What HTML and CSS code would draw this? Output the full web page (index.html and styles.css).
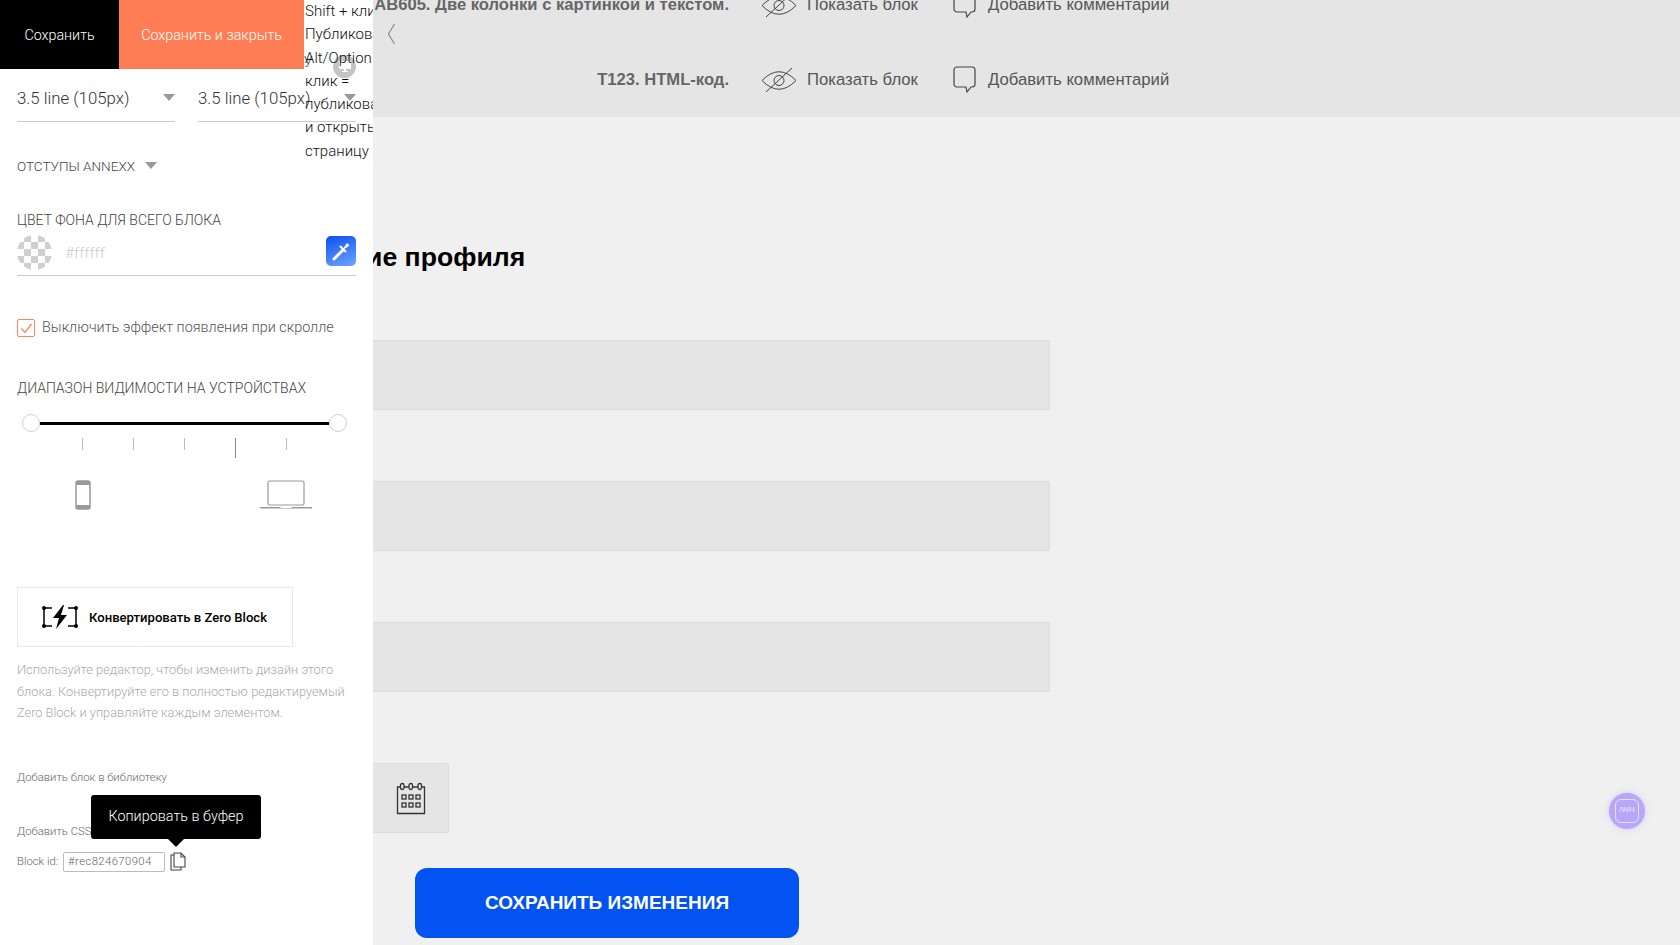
FILE: index.html
```html
<!DOCTYPE html>
<html lang="en">
<head>
  <meta charset="UTF-8">
  <title>Настройки блока</title>
  <link rel="stylesheet" href="styles.css">
</head>
<body>

  <div class="page">
    <div class="blocks">
      <svg class="blocks-back" width="9" height="22" viewBox="0 0 9 22"><path d="M7.500 1 1.500 11l6 10" fill="none" stroke="#8a8a8a" stroke-width="1.200"/></svg>
      <div class="block-row">
        <div class="block-title">AB605. Две колонки с картинкой и текстом.</div>
        <div class="block-action block-show">
          <svg width="36" height="32" viewBox="0 0 36 32"><path d="M1 16.500Q18 -1 35 16.500Q18 34 1 16.500Z" fill="none" stroke="#444"/><circle cx="18" cy="16.500" r="5" fill="none" stroke="#444"/><path d="M5 28 31 4" stroke="#444"/></svg>
          <span>Показать блок</span>
        </div>
        <div class="block-action">
          <svg width="23" height="27" viewBox="0 0 23 27"><path d="M4 1h15a3 3 0 0 1 3 3v14a3 3 0 0 1-3 3h-1l-4 5-1-5H4a3 3 0 0 1-3-3V4a3 3 0 0 1 3-3Z" fill="none" stroke="#444" stroke-width="1.200"/></svg>
          <span>Добавить комментарий</span>
        </div>
      </div>
      <div class="block-row">
        <div class="block-title">T123. HTML-код.</div>
        <div class="block-action block-show">
          <svg width="36" height="32" viewBox="0 0 36 32"><path d="M1 16.500Q18 -1 35 16.500Q18 34 1 16.500Z" fill="none" stroke="#444"/><circle cx="18" cy="16.500" r="5" fill="none" stroke="#444"/><path d="M5 28 31 4" stroke="#444"/></svg>
          <span>Показать блок</span>
        </div>
        <div class="block-action">
          <svg width="23" height="27" viewBox="0 0 23 27"><path d="M4 1h15a3 3 0 0 1 3 3v14a3 3 0 0 1-3 3h-1l-4 5-1-5H4a3 3 0 0 1-3-3V4a3 3 0 0 1 3-3Z" fill="none" stroke="#444" stroke-width="1.200"/></svg>
          <span>Добавить комментарий</span>
        </div>
      </div>
    </div>

    <div class="profile">
      <h1 class="profile-title">Изменение профиля</h1>
      <div class="profile-input"></div>
      <div class="profile-input"></div>
      <div class="profile-input"></div>
      <div class="profile-input profile-date">
        <svg width="30" height="33" viewBox="0 0 30 33" fill="none" stroke="#333" stroke-width="1.300">
          <path d="M4 5H1.500v26.500h27V5H26M8 5h5M17 5h5"/>
          <rect x="4.500" y="1.500" width="3.500" height="6" rx="1.750"/><rect x="13" y="1.500" width="3.500" height="6" rx="1.750"/><rect x="22" y="1.500" width="3.500" height="6" rx="1.750"/>
          <rect x="6" y="13" width="4" height="4"/><rect x="13" y="13" width="4" height="4"/><rect x="20" y="13" width="4" height="4"/>
          <rect x="6" y="21" width="4" height="4"/><rect x="13" y="21" width="4" height="4"/><rect x="20" y="21" width="4" height="4"/>
        </svg>
      </div>
      <div class="profile-save">СОХРАНИТЬ ИЗМЕНЕНИЯ</div>
    </div>

    <div class="chat-widget"><span>/WH</span></div>
  </div>

  <div class="panel">
    <div class="panel-top">
      <div class="panel-save">Сохранить</div>
      <div class="panel-close">Сохранить и закрыть</div>
    </div>

    <div class="panel-hint">Shift + клик<br>Публиковать<br>Alt/Option<br>клик =<br>публиковать<br>и открыть<br>страницу</div>

    <div class="panel-body">
      <div class="pad-fields">
        <div class="pad-field">
          <div class="field-label">ОТСТУПЫ СВЕРХУ</div>
          <div class="pad-select"><span>3.5 line (105px)</span><i class="arrow"></i></div>
        </div>
        <div class="pad-field">
          <div class="field-label">ОТСТУПЫ СНИЗУ</div>
          <div class="pad-select"><span>3.5 line (105px)</span><i class="arrow"></i></div>
          <div class="screen-badge">
            <svg width="14" height="13" viewBox="0 0 14 13"><path d="M1 1h12v8H8v2h2v1H4v-1h2V9H1Z" fill="#fff"/></svg>
          </div>
        </div>
      </div>

      <div class="annexx">ОТСТУПЫ ANNEXX <i class="arrow"></i></div>

      <div class="field-label color-label">ЦВЕТ ФОНА ДЛЯ ВСЕГО БЛОКА</div>
      <div class="color-field">
        <div class="color-swatch"></div>
        <div class="color-value">#ffffff</div>
        <div class="color-picker">
          <svg width="22" height="22" viewBox="0 0 22 22" fill="#fff"><path d="M4 19 12.500 10.500" stroke="#fff" stroke-width="3" stroke-linecap="round"/><path d="M10.500 6.500l5 5" stroke="#fff" stroke-width="2" stroke-linecap="round"/><path d="M13 9 16.500 3.500a2 2 0 0 1 2.500 2.500L13.500 9.500Z"/></svg>
        </div>
      </div>

      <div class="scroll-check">
        <div class="check-box">
          <svg width="13" height="11" viewBox="0 0 13 11"><path d="M1.500 5.500 5 9.500 11.500 1" fill="none" stroke="#ff8562" stroke-width="1.300"/></svg>
        </div>
        <span>Выключить эффект появления при скролле</span>
      </div>

      <div class="field-label range-label">ДИАПАЗОН ВИДИМОСТИ НА УСТРОЙСТВАХ</div>
      <div class="range">
        <div class="range-knob"></div>
        <div class="range-line"></div>
        <div class="range-knob"></div>
      </div>
      <div class="range-ticks">
        <i></i><i></i><i></i><i class="tick-long"></i><i></i>
      </div>
      <div class="range-devices">
        <svg width="16" height="30" viewBox="0 0 16 30"><rect x="1" y="1" width="14" height="28" rx="2" fill="none" stroke="#999" stroke-width="1.500"/><rect x="1" y="1" width="14" height="4" fill="#999"/><rect x="1" y="25" width="14" height="4" fill="#999"/></svg>
        <svg width="52" height="30" viewBox="0 0 52 30"><rect x="8" y="1" width="36" height="24" rx="1.500" fill="none" stroke="#999" stroke-width="1.200"/><path d="M0 27h20l1 1h10l1-1h20v1.500H0Z" fill="#999"/></svg>
      </div>

      <div class="zero-btn">
        <svg width="36" height="24" viewBox="0 0 36 24">
          <path d="M10 3H2v18h8M26 3h8v18h-8" fill="none" stroke="#000" stroke-width="1.500"/>
          <path d="M21 0 11 13h6l-3 11 11-14h-6l3-10Z"/>
          <circle cx="2" cy="3" r="2"/><circle cx="34" cy="3" r="2"/><circle cx="2" cy="21" r="2"/><circle cx="34" cy="21" r="2"/>
        </svg>
        <span>Конвертировать в Zero Block</span>
      </div>
      <div class="zero-note">Используйте редактор, чтобы изменить дизайн этого блока. Конвертируйте его в полностью редактируемый Zero Block и управляйте каждым элементом.</div>

      <div class="panel-link link-lib">Добавить блок в библиотеку</div>
      <div class="panel-link link-css">Добавить CSS</div>

      <div class="block-id">
        <span>Block id:</span>
        <div class="block-id-value">#rec824670904</div>
        <svg width="16" height="19" viewBox="0 0 16 19" fill="none" stroke="#444" stroke-width="1.100"><path d="M4 3H1v15h10v-3"/><path d="M4 1h7l4 4v10H4Z"/><path d="M11 1v4h4"/></svg>
        <div class="copy-tip">Копировать в буфер</div>
      </div>
    </div>
  </div>

</body>
</html>
```

FILE: styles.css
```css
html, body {
  margin: 0;
  height: 100%;
  overflow: hidden;
}
div, h1 {
  box-sizing: border-box;
}
body {
  background: #f0f0f0;
  font-family: "Liberation Sans", Arial, sans-serif;
}

.page {
  height: 945px;
}

/* verhnie bloki */
.blocks {
  height: 117px;
  background: #e5e5e5;
  overflow: hidden;
  position: relative;
  display: flex;
  flex-direction: column;
  justify-content: flex-end;
}
.blocks-back {
  position: absolute;
  left: 387px;
  top: 23px;
}
.block-row {
  flex: none;
  height: 75px;
  display: flex;
  align-items: center;
}
.block-title {
  width: 729px;
  text-align: right;
  white-space: nowrap;
  font-size: 16.600px;
  font-weight: bold;
  color: #666;
}
.block-action {
  display: flex;
  align-items: center;
  gap: 12px;
  font-size: 16.700px;
  color: #555;
}
.block-show {
  margin-left: 32px;
  width: 192px;
  gap: 10px;
}

/* forma */
.profile {
  width: 797px;
  margin-left: 253px;
}
.profile-title {
  margin: 124px 0 0;
  height: 33px;
  font-size: 26.600px;
  line-height: 33px;
  font-weight: bold;
  color: #000;
}
.profile-input {
  height: 70px;
  margin-top: 66px;
  background: #e5e5e5;
  border: 1px solid #dcdcdc;
  border-radius: 2px;
}
.profile-input + .profile-input {
  margin-top: 71px;
}
.profile-date {
  width: 196px;
  display: flex;
  align-items: center;
  justify-content: flex-end;
  padding-right: 22px;
}
.profile-save {
  width: 384px;
  height: 70px;
  margin: 35px 0 0 162px;
  background: #0352f2;
  border-radius: 12px;
  color: #fff;
  font-size: 19px;
  font-weight: bold;
  display: flex;
  align-items: center;
  justify-content: center;
}

.chat-widget {
  position: absolute;
  left: 1609px;
  top: 793px;
  width: 36px;
  height: 36px;
  border-radius: 50%;
  background: #b8a6f7;
  display: flex;
  align-items: center;
  justify-content: center;
  box-shadow: 0 0 6px rgba(184, 166, 247, 0.5);
}
.chat-widget span {
  width: 22px;
  height: 22px;
  border: 1px solid #e6deff;
  border-radius: 6px;
  color: #efeaff;
  font-size: 8px;
  line-height: 20px;
  text-align: center;
}

/* panel */
.panel {
  position: absolute;
  left: 0;
  top: 0;
  width: 373px;
  height: 945px;
  background: #fff;
  overflow: hidden;
  font-family: Roboto, "Noto Sans", sans-serif;
  font-weight: 300;
  color: #333;
}
.panel-top {
  position: absolute;
  left: 0;
  top: 0;
  z-index: 3;
  display: flex;
  height: 69px;
  font-size: 14.300px;
  color: #fff;
}
.panel-save {
  width: 119px;
  background: #000;
  display: flex;
  align-items: center;
  justify-content: center;
}
.panel-close {
  width: 185px;
  background: #ff7d55;
  display: flex;
  align-items: center;
  justify-content: center;
}
.panel-hint {
  position: absolute;
  left: 305px;
  top: 0;
  z-index: 3;
  font-size: 15px;
  line-height: 23.300px;
  color: #111;
  white-space: nowrap;
}
.panel-body {
  padding: 54px 17px 0;
  position: relative;
}

.field-label {
  font-size: 14px;
  line-height: 16px;
  color: #444;
  white-space: nowrap;
}
.pad-fields {
  display: flex;
  gap: 23px;
}
.pad-field {
  width: 158px;
  flex: none;
  position: relative;
}
.pad-select {
  height: 52px;
  padding-top: 17px;
  display: flex;
  justify-content: space-between;
  align-items: flex-start;
  font-size: 16.800px;
  line-height: 22px;
  white-space: nowrap;
  border-bottom: 1px solid #ccc;
}
.arrow {
  display: inline-block;
  flex: none;
  margin-top: 7px;
  width: 0;
  height: 0;
  border-left: 6px solid transparent;
  border-right: 6px solid transparent;
  border-top: 7px solid #999;
}
.screen-badge {
  position: absolute;
  left: 135px;
  top: 1px;
  width: 23px;
  height: 23px;
  border-radius: 50%;
  background: #c4c4c4;
  display: flex;
  align-items: center;
  justify-content: center;
}
.annexx {
  margin-top: 35px;
  font-size: 13.500px;
  line-height: 18px;
  color: #444;
  display: flex;
  align-items: center;
  gap: 10px;
}
.annexx .arrow {
  margin-top: -2px;
}
.color-label {
  margin-top: 37px;
}
.color-field {
  display: flex;
  align-items: center;
  height: 44px;
  margin-top: 4px;
  border-bottom: 1px solid #ccc;
  padding-bottom: 2px;
}
.color-swatch {
  width: 35px;
  height: 35px;
  border-radius: 50%;
  background: repeating-conic-gradient(#cfcfcf 0 25%, #fff 0 50%) 0 0 / 14px 14px;
}
.color-value {
  flex: 1;
  margin-left: 13px;
  font-size: 15.500px;
  color: #ccc;
}
.color-picker {
  width: 30px;
  height: 30px;
  margin-top: -4px;
  border-radius: 5px;
  background: linear-gradient(160deg, #0a50f0, #6fa5ff);
  display: flex;
  align-items: center;
  justify-content: center;
}
.scroll-check {
  display: flex;
  align-items: center;
  gap: 7px;
  margin-top: 43px;
  font-size: 14.400px;
  line-height: 18px;
  color: #555;
  white-space: nowrap;
}
.check-box {
  width: 18px;
  height: 18px;
  border: 1px solid #ff8562;
  border-radius: 2px;
  background: #fff;
  display: flex;
  align-items: center;
  justify-content: center;
}
.range-label {
  margin-top: 43px;
}
.range {
  display: flex;
  align-items: center;
  margin: 18px 0 0 5px;
  width: 325px;
}
.range-knob {
  flex: none;
  width: 18px;
  height: 18px;
  border: 1px solid #d0d0d0;
  border-radius: 50%;
  background: #fff;
}
.range-line {
  flex: 1;
  height: 3px;
  background: #000;
}
.range-ticks {
  display: flex;
  gap: 50px;
  align-items: flex-start;
  margin: 6px 0 0 65px;
  height: 21px;
}
.range-ticks i {
  width: 1px;
  height: 12px;
  background: #bbb;
}
.range-ticks .tick-long {
  height: 20px;
  background: #888;
}
.range-devices {
  display: flex;
  justify-content: space-between;
  margin: 21px 44px 0 58px;
}
.zero-btn {
  width: 276px;
  height: 60px;
  margin-top: 77px;
  border: 1px solid #e8e8e8;
  display: flex;
  align-items: center;
  gap: 11px;
  padding-left: 24px;
  font-size: 13.100px;
  font-weight: 500;
  color: #000;
  white-space: nowrap;
}
.zero-note {
  margin-top: 12px;
  width: 339px;
  font-size: 12.800px;
  line-height: 21.500px;
  color: #aaa;
}
.panel-link {
  font-size: 11.300px;
  line-height: 16px;
  color: #666;
}
.link-lib {
  margin-top: 46px;
}
.link-css {
  margin-top: 38px;
}
.block-id {
  display: flex;
  align-items: center;
  gap: 5px;
  margin-top: 12px;
  font-size: 11.300px;
  color: #666;
  position: relative;
  white-space: nowrap;
}
.block-id-value {
  width: 102px;
  height: 20px;
  padding-left: 4px;
  border: 1px solid #bbb;
  border-radius: 2px;
  line-height: 18px;
  letter-spacing: 0.4px;
}
.copy-tip {
  position: absolute;
  left: 74px;
  top: -57px;
  width: 170px;
  height: 44px;
  background: #000;
  border-radius: 3px;
  color: #fff;
  font-size: 14.400px;
  display: flex;
  align-items: center;
  justify-content: center;
}
.copy-tip::after {
  content: "";
  position: absolute;
  left: 77px;
  bottom: -8px;
  border-left: 8px solid transparent;
  border-right: 8px solid transparent;
  border-top: 8px solid #000;
}
```
